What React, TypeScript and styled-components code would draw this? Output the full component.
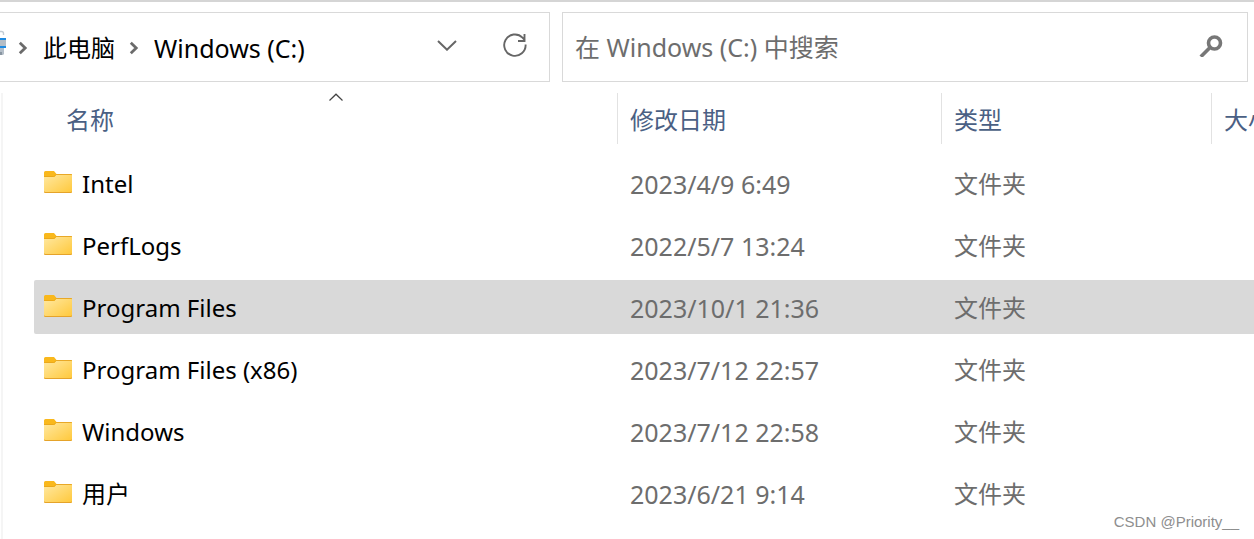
import React from "react";
import styled, { createGlobalStyle } from "styled-components";

const GlobalStyle = createGlobalStyle`
  * { box-sizing: border-box; }
  body {
    margin: 0;
    background: #fff;
    color: #000;
    font-family: "Noto Sans", "Noto Sans CJK SC", sans-serif;
    font-size: 24px;
    line-height: 36px;
  }
  button, input { font: inherit; color: inherit; }
`;

const Window = styled.main`
  position: relative;
  display: flex;
  flex-direction: column;
  min-height: 100vh;
  overflow: hidden;
  border-top: 2px solid #d5d5d5;
`;

const Toolbar = styled.header`
  display: grid;
  grid-template-columns: minmax(0, 550fr) minmax(0, 686fr);
  gap: 12px;
  padding: 10px 6px 11px 0;
`;

const AddressBar = styled.nav`
  display: flex;
  align-items: center;
  height: 70px;
  padding-right: 20px;
  border: 1px solid #d9d9d9;
  border-left: 0;
`;

const Crumbs = styled.ol`
  display: flex;
  flex: 1;
  align-items: center;
  margin: 0;
  padding: 2px 0 0;
  list-style: none;
  white-space: nowrap;
`;

const Crumb = styled.li`
  display: flex;
  align-items: center;
`;

const CrumbLink = styled.a<{ $latin?: boolean }>`
  color: inherit;
  font-size: ${(p) => (p.$latin ? 25 : 24)}px;
  text-decoration: none;
`;

const CrumbArrow = styled.svg<{ $before: number; $after: number }>`
  width: 10px;
  height: 14px;
  margin: 0 ${(p) => p.$after}px 0 ${(p) => p.$before}px;
`;

const IconButton = styled.button`
  display: flex;
  align-items: center;
  justify-content: center;
  width: 28px;
  height: 32px;
  margin-bottom: 4px;
  padding: 0;
  border: 0;
  background: none;
  color: #666;
`;

const BarActions = styled.div`
  display: flex;
  gap: 40px;
`;

const SearchBox = styled.form`
  display: flex;
  align-items: center;
  height: 70px;
  padding: 0 22px 0 12px;
  border: 1px solid #d9d9d9;
`;

const SearchInput = styled.input`
  flex: 1;
  min-width: 0;
  padding: 0;
  border: 0;
  outline: 0;
  background: none;
  font-size: 25px;
  &::placeholder { color: #6d6d6d; opacity: 1; }
`;

const Pane = styled.section`
  flex: 1;
  margin-left: 1px;
  padding-left: 31px;
  border-left: 2px solid #f5f5f5;
`;

const FileTable = styled.table`
  width: 100%;
  table-layout: fixed;
  border-collapse: collapse;
`;

const Column = styled.col<{ $width?: number }>`
  width: ${(p) => (p.$width ? `${p.$width}px` : "auto")};
`;

const HeadCell = styled.th`
  padding: 0 0 12px;
  color: #4a6084;
  font-weight: 400;
  text-align: left;
  white-space: nowrap;
`;

const HeadLabel = styled.div<{ $first?: boolean; $last?: boolean }>`
  position: relative;
  height: 51px;
  margin-left: ${(p) => (p.$first ? 20 : 0)}px;
  padding: 9px 0 0 12px;
  border-right: ${(p) => (p.$last ? "0" : "1px solid #e2e2e2")};
`;

const SortMark = styled.svg`
  position: absolute;
  top: 0;
  left: 50%;
  width: 14px;
  height: 9px;
  transform: translateX(-50%);
`;

const Cell = styled.td`
  padding: 0 0 8px;
  white-space: nowrap;
`;

const CellBody = styled.div<{ $selected: boolean; $kind?: "name" | "date" }>`
  display: flex;
  align-items: center;
  gap: 10px;
  height: 54px;
  padding: 2px 0 0 ${(p) => (p.$kind === "name" ? 10 : 12)}px;
  border-radius: ${(p) => (p.$kind === "name" ? "2px 0 0 2px" : "0")};
  background: ${(p) => (p.$selected ? "#d9d9d9" : "transparent")};
  color: ${(p) => (p.$kind === "name" ? "#000" : "#6d6d6d")};
  font-size: ${(p) => (p.$kind === "date" ? 25 : 24)}px;
`;

const FolderSvg = styled.svg`
  flex: none;
  width: 28px;
  height: 24px;
  margin-bottom: 2px;
`;

const Watermark = styled.small`
  position: absolute;
  right: 15px;
  bottom: 7px;
  color: #8e8e8e;
  font-family: "Liberation Sans", sans-serif;
  font-size: 15px;
  line-height: 20px;
`;

const files = [
  { name: "Intel", date: "2023/4/9 6:49" },
  { name: "PerfLogs", date: "2022/5/7 13:24" },
  { name: "Program Files", date: "2023/10/1 21:36", selected: true },
  { name: "Program Files (x86)", date: "2023/7/12 22:57" },
  { name: "Windows", date: "2023/7/12 22:58" },
  { name: "用户", date: "2023/6/21 9:14" },
];

const Arrow = ({ before, after }: { before: number; after: number }) => (
  <CrumbArrow $before={before} $after={after} viewBox="0 0 10 14" fill="none" stroke="#6b6b6b" strokeWidth="2.8" aria-hidden="true">
    <path d="M1.8 1.8 7.2 7l-5.4 5.2" />
  </CrumbArrow>
);

const ComputerIcon = () => (
  <svg width="6" height="34" viewBox="0 0 6 34" aria-hidden="true">
    <path d="M0 1.500h1.500a2 2 0 0 1 2 2V5" fill="none" stroke="#c3ccd4" strokeWidth="1.4" />
    <path d="M0 8h6v10H0z" fill="#b5bdc5" />
    <path d="M0 8h6v2H0zM0 16h6v2H0z" fill="#1f8ae0" />
    <path d="M0 18h4v6l-1 1H0z" fill="#b4bec8" />
    <path d="M0 22h2v3H0z" fill="#8995a1" />
  </svg>
);

const FolderIcon = () => (
  <FolderSvg viewBox="0 0 28 24" aria-hidden="true">
    <defs>
      <linearGradient id="folder-front" x1="0" y1="0" x2="1" y2="1">
        <stop offset="0" stopColor="#ffe8a0" />
        <stop offset="1" stopColor="#ffc83a" />
      </linearGradient>
    </defs>
    <path d="M0 1.5Q0 0 1.5 0H10l2.5 3H27q1 0 1 1v5H0z" fill="#f9b81c" />
    <path d="M12.5 3H27q1 0 1 1H12z" fill="#e8a827" />
    <path d="M0 6h9.5q1 0 1.6-.8L12 4h15.5q.5 0 .5.5v16q0 1.5-1.5 1.5h-25Q0 22 0 20.500z" fill="url(#folder-front)" />
    <path d="M0 20.500Q0 22 1.500 22h25q1.500 0 1.500-1.500v-.5q-.3 1-1.500 1h-25Q.3 21 0 20z" fill="#e5a32a" />
    <path d="M0 5.500h9.500q1 0 1.600-.8L12 3.500" fill="none" stroke="#eba819" />
  </FolderSvg>
);

export default function App() {
  return (
    <Window>
      <GlobalStyle />
      <Toolbar>
        <AddressBar aria-label="地址">
          <ComputerIcon />
          <Crumbs>
            <Crumb>
              <Arrow before={12} after={15} />
              <CrumbLink href="#pc">此电脑</CrumbLink>
            </Crumb>
            <Crumb>
              <Arrow before={14} after={15} />
              <CrumbLink href="#c" $latin>Windows (C:)</CrumbLink>
            </Crumb>
          </Crumbs>
          <BarActions>
            <IconButton type="button" aria-label="历史记录">
              <svg width="20" height="12" viewBox="0 0 20 12" fill="none" stroke="currentColor" strokeWidth="2">
                <path d="m1 2 9 8.700 9-8.700" />
              </svg>
            </IconButton>
            <IconButton type="button" aria-label="刷新">
              <svg width="24" height="24" viewBox="0 0 24 24" fill="none" stroke="currentColor" strokeWidth="1.900">
                <path d="M22.600 11.500A10.700 10.700 0 1 1 19.500 4.600L22 7.500M21.500 1v7H15" />
              </svg>
            </IconButton>
          </BarActions>
        </AddressBar>
        <SearchBox role="search" onSubmit={(e) => e.preventDefault()}>
          <SearchInput type="text" aria-label="搜索" placeholder="在 Windows (C:) 中搜索" />
          <IconButton type="submit" aria-label="开始搜索">
            <svg width="24" height="24" viewBox="0 0 24 24" fill="none" stroke="#777" strokeWidth="3.600">
              <circle cx="15.500" cy="10" r="6" />
              <path d="M11.300 14.200 1.800 23.700" />
            </svg>
          </IconButton>
        </SearchBox>
      </Toolbar>
      <Pane>
        <FileTable>
          <colgroup>
            <Column $width={584} />
            <Column $width={324} />
            <Column $width={270} />
            <Column />
          </colgroup>
          <thead>
            <tr>
              <HeadCell scope="col" aria-sort="ascending">
                <HeadLabel $first>
                  名称
                  <SortMark viewBox="0 0 14 9" fill="none" stroke="#444" strokeWidth="1.200" aria-hidden="true">
                    <path d="m.5 7.500 6.500-6.300 6.500 6.300" />
                  </SortMark>
                </HeadLabel>
              </HeadCell>
              <HeadCell scope="col"><HeadLabel>修改日期</HeadLabel></HeadCell>
              <HeadCell scope="col"><HeadLabel>类型</HeadLabel></HeadCell>
              <HeadCell scope="col"><HeadLabel $last>大小</HeadLabel></HeadCell>
            </tr>
          </thead>
          <tbody>
            {files.map(({ name, date, selected = false }) => (
              <tr key={name}>
                <Cell>
                  <CellBody $kind="name" $selected={selected}>
                    <FolderIcon />
                    {name}
                  </CellBody>
                </Cell>
                <Cell><CellBody $kind="date" $selected={selected}>{date}</CellBody></Cell>
                <Cell><CellBody $selected={selected}>文件夹</CellBody></Cell>
                <Cell><CellBody $selected={selected} /></Cell>
              </tr>
            ))}
          </tbody>
        </FileTable>
      </Pane>
      <Watermark>CSDN @Priority__</Watermark>
    </Window>
  );
}
